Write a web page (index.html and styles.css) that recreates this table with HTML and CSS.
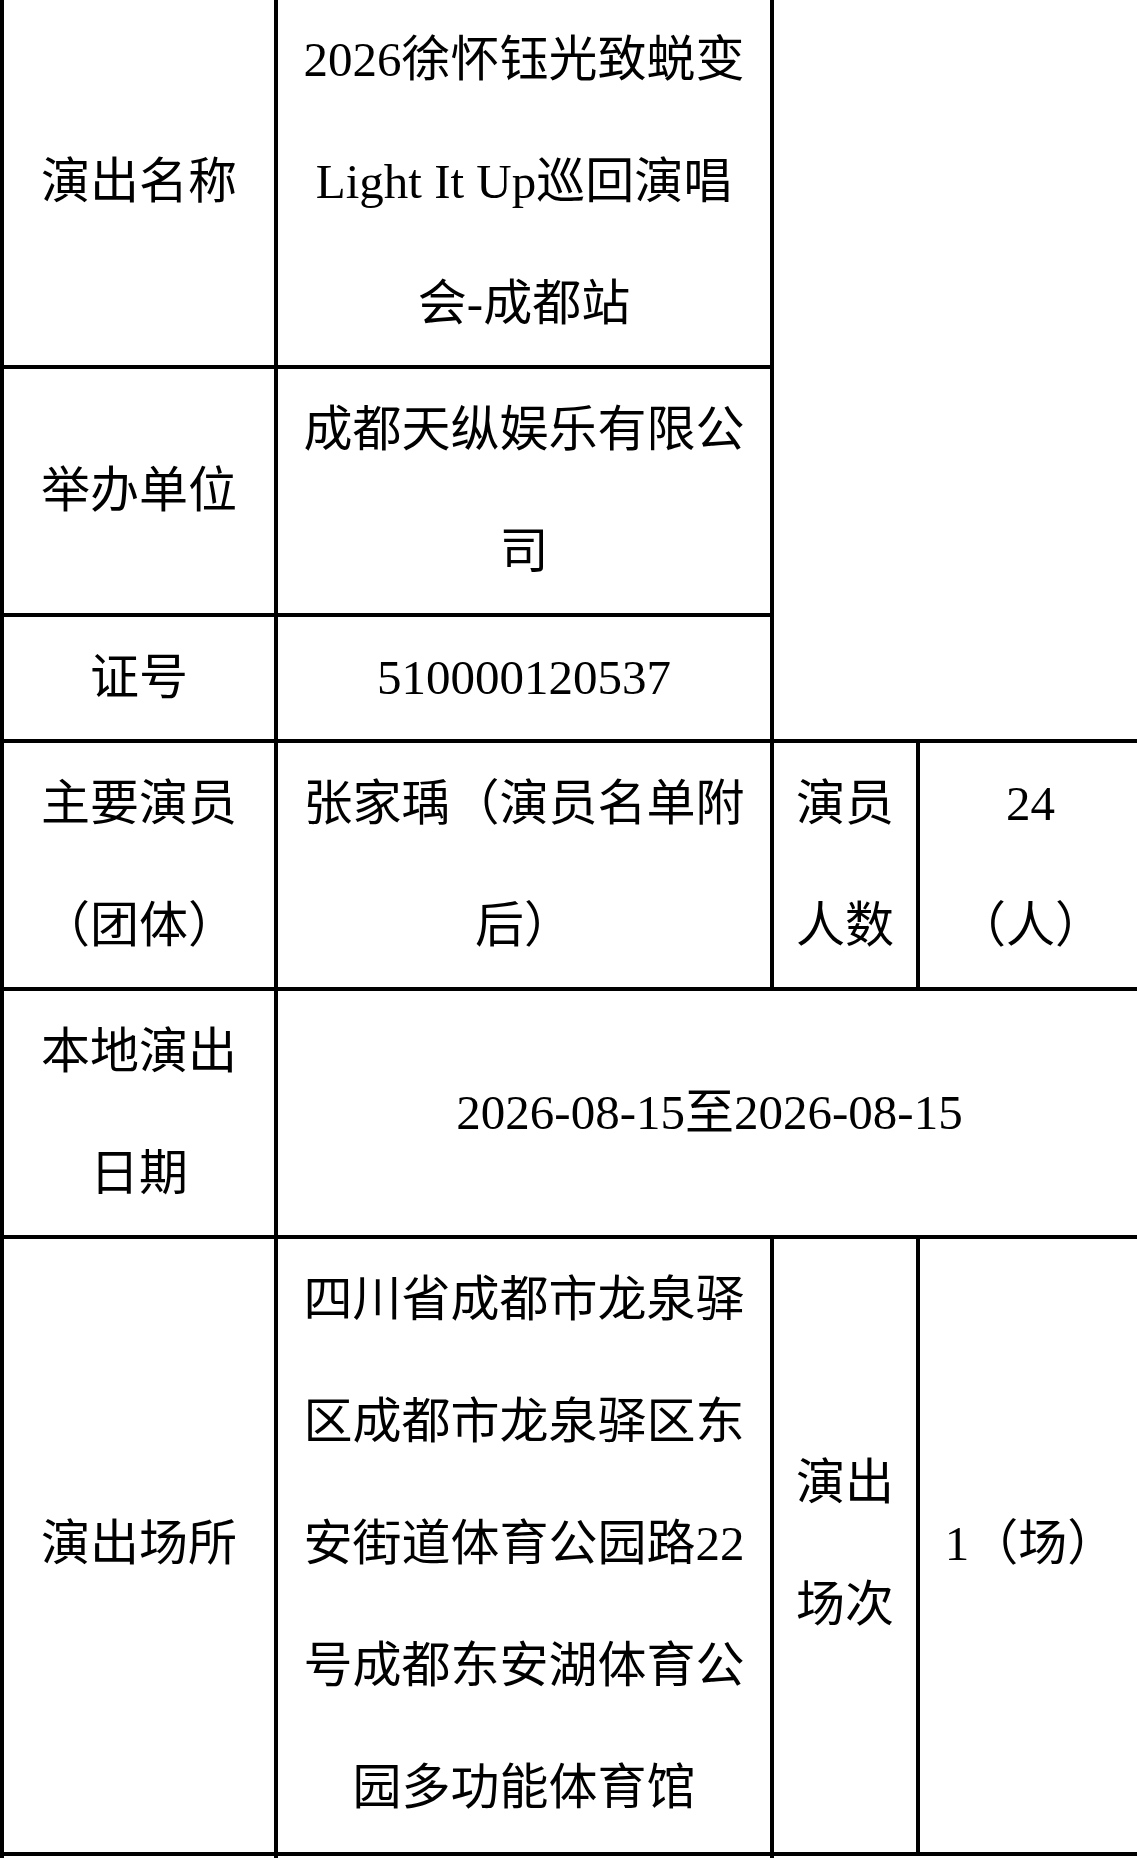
FILE: index.html
```html
<!DOCTYPE html>
<html lang="zh-CN">
<head>
<meta charset="utf-8">
<title>演出信息</title>
<link rel="stylesheet" href="styles.css">
</head>
<body>
<div class="page">
  <div class="sheet">
    <div class="cell first top">演出名称</div>
    <div class="cell top">2026徐怀钰光致蜕变Light It Up巡回演唱会-成都站</div>
    <div class="filler"></div>

    <div class="cell first">举办单位</div>
    <div class="cell">成都天纵娱乐有限公司</div>

    <div class="cell first">证号</div>
    <div class="cell">510000120537</div>

    <div class="cell first">主要演员（团体）</div>
    <div class="cell">张家瑀（演员名单附后）</div>
    <div class="cell narrow">演员人数</div>
    <div class="cell">24（人）</div>

    <div class="cell first">本地演出日期</div>
    <div class="cell span3">2026-08-15至2026-08-15</div>

    <div class="cell first last">演出场所</div>
    <div class="cell last">四川省成都市龙泉驿区成都市龙泉驿区东安街道体育公园路22号成都东安湖体育公园多功能体育馆</div>
    <div class="cell narrow last">演出场次</div>
    <div class="cell last">1（场）</div>

    <div class="cell first stub"></div>
    <div class="cell stub"></div>
    <div class="cell stub span2"></div>
  </div>
</div>
</body>
</html>
```

FILE: styles.css
```css
html, body {
  margin: 0;
  padding: 0;
  background: #ffffff;
}

.page {
  width: 1137px;
  height: 1858px;
  overflow: hidden;
}

.sheet {
  display: grid;
  grid-template-columns: 278px 496px 146px 225px;
  width: 1145px;
  margin-top: -5px;
  font-family: "Liberation Serif", "Noto Sans CJK SC", serif;
  font-size: 49px;
  line-height: 122px;
  color: #000000;
  text-spacing-trim: space-all;
}

.cell {
  box-sizing: border-box;
  display: flex;
  align-items: center;
  justify-content: center;
  text-align: center;
  padding: 0 20px;
  border-right: 4px solid #000000;
  border-bottom: 4px solid #000000;
}

.cell.first {
  border-left: 4px solid #000000;
}

.cell.top {
  border-top: 4px solid #000000;
}

.cell.narrow {
  padding: 0 18px;
}

.cell.last {
  padding-bottom: 3px;
}

.cell.span3 {
  grid-column: span 3;
}

.cell.span2 {
  grid-column: span 2;
}

.cell.stub {
  height: 40px;
}

.filler {
  grid-column: 3 / span 2;
  grid-row: 1 / span 3;
  border-bottom: 4px solid #000000;
}
```
